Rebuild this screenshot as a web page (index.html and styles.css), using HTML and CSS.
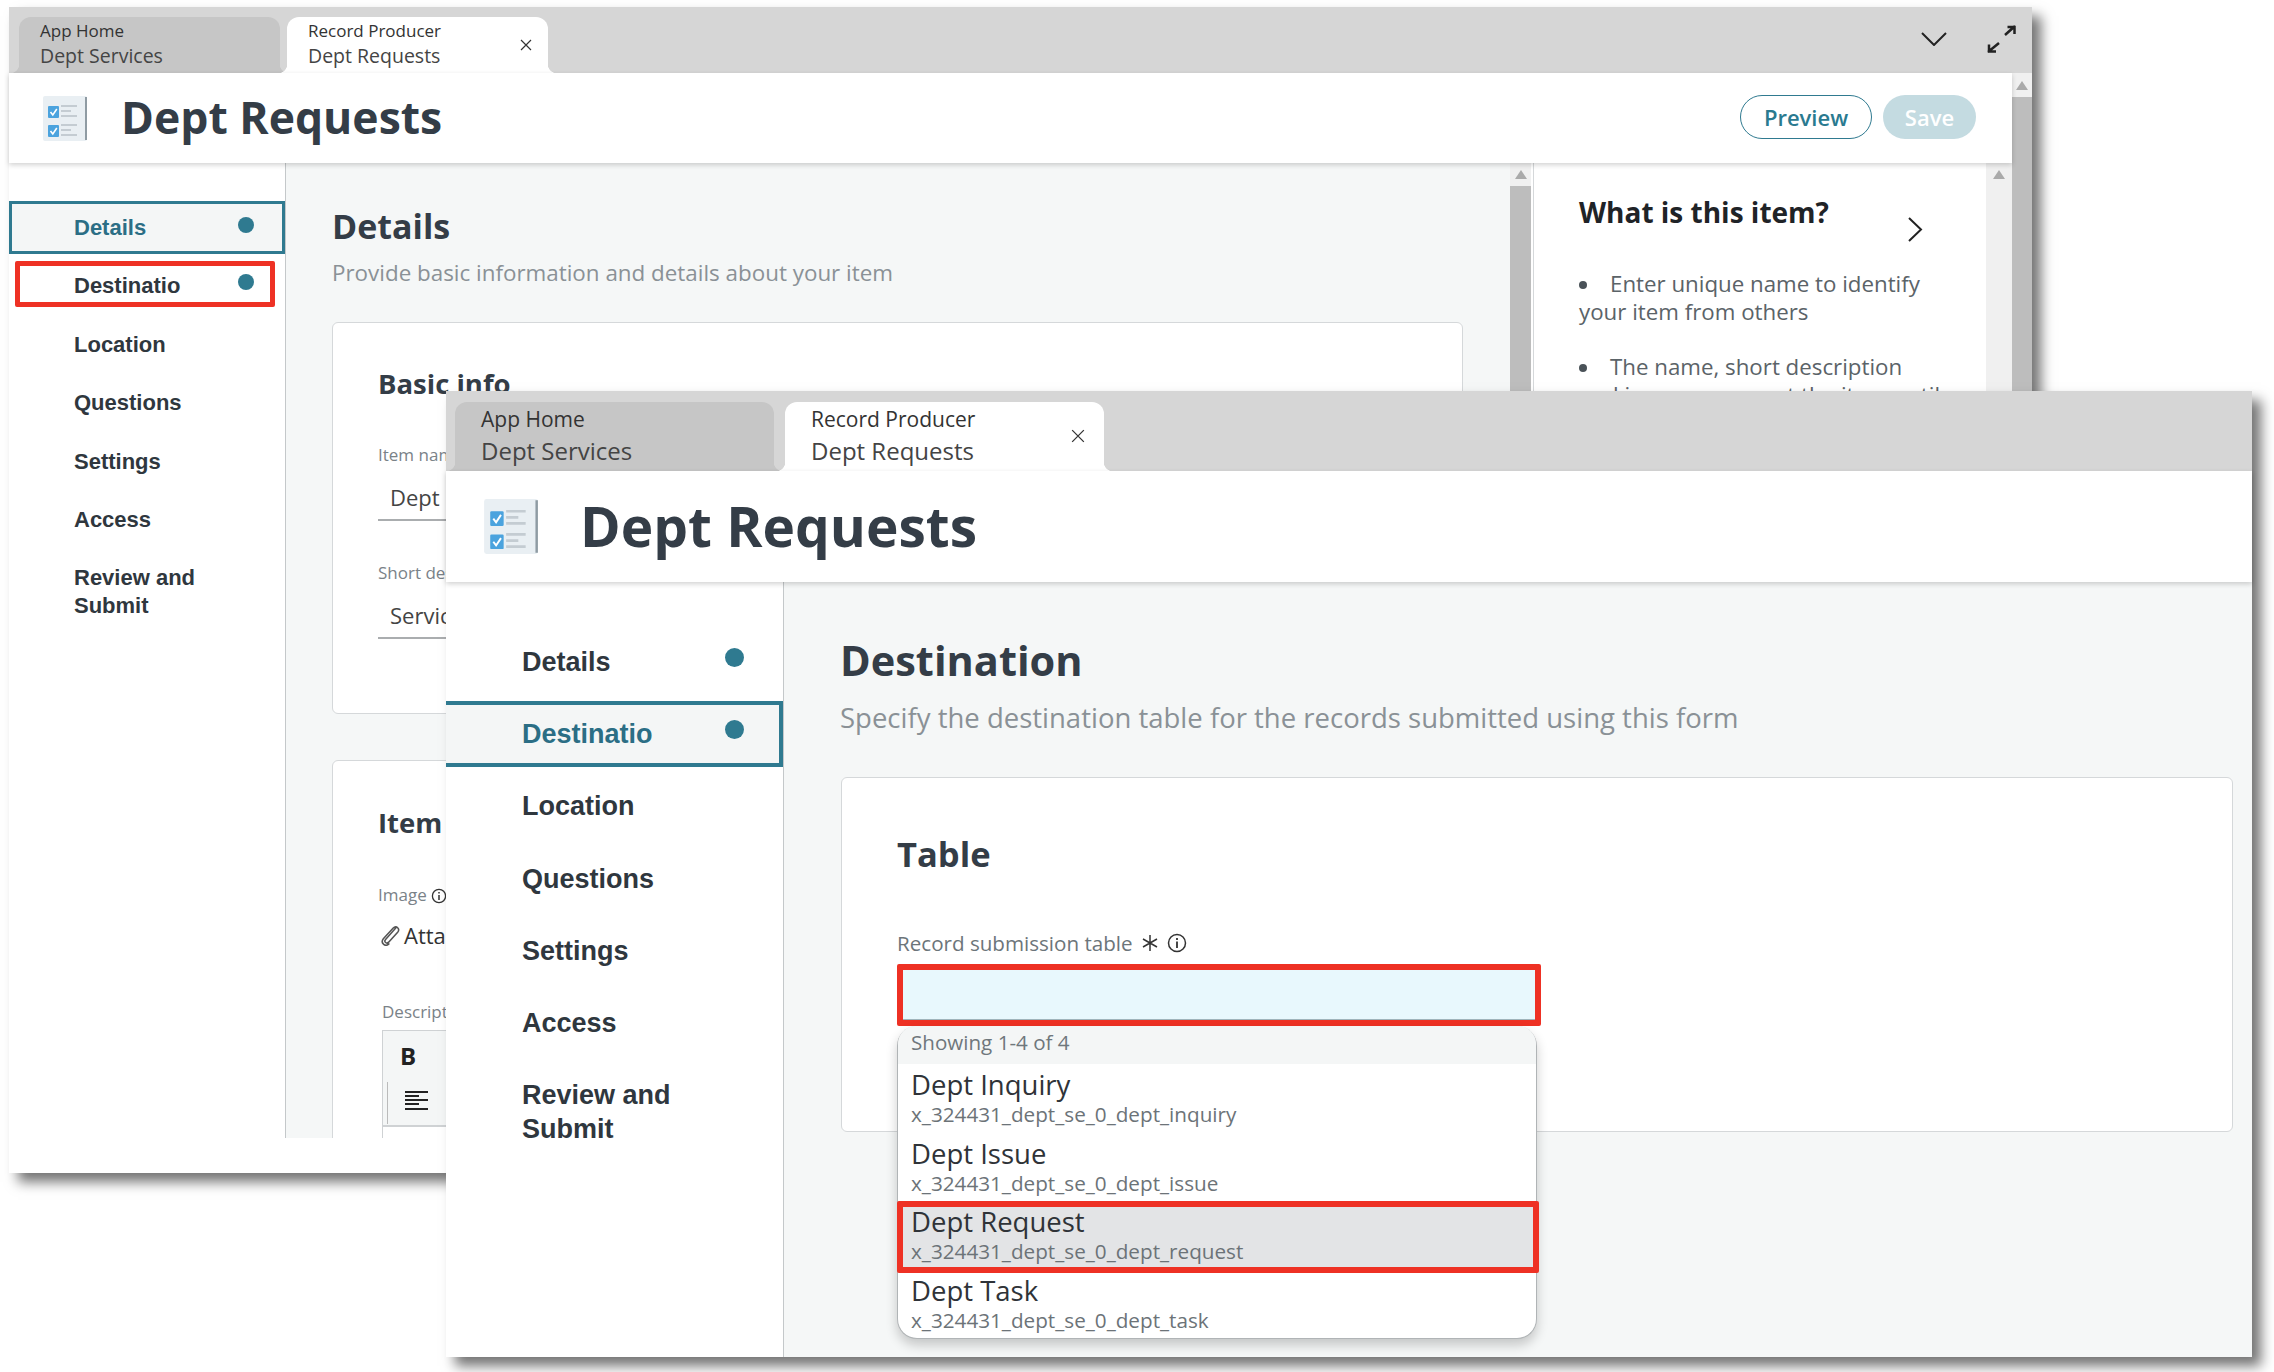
FILE: index.html
```html
<!DOCTYPE html>
<html lang="en">
<head>
  <meta charset="UTF-8">
  <title>Dept Requests</title>
  <link rel="stylesheet" href="styles.css">
</head>
<body>
  <svg width="0" height="0" class="defs">
    <symbol id="checklist" viewBox="0 0 44 45">
      <rect width="44" height="45" rx="2" fill="#e9eff3"/>
      <rect x="42" y="1" width="2" height="43" fill="#8f9ba3"/>
      <rect x="5" y="10" width="11" height="12" rx="1" fill="#4ba3de"/>
      <rect x="5" y="29" width="11" height="12" rx="1" fill="#4ba3de"/>
      <path d="M7.5 16l2.3 3 4-6M7.5 35l2.3 3 4-6" fill="none" stroke="#fff" stroke-width="1.6"/>
      <path d="M18 10h16M18 15h10M18 20h16M18 29h16M18 34h10M18 39h16" stroke="#c4ccd2" stroke-width="2.2"/>
    </symbol>
  </svg>

  <section class="window win-back">
    <div class="tabbar">
      <div class="tab">
        <span class="tab-small">App Home</span>
        <span class="tab-big">Dept Services</span>
      </div>
      <div class="tab tab-on">
        <span class="tab-small">Record Producer</span>
        <span class="tab-big">Dept Requests</span>
        <svg class="tab-close" viewBox="0 0 12 12"><path d="M1 1l10 10M11 1L1 11" stroke="#333" stroke-width="1.2"/></svg>
      </div>
      <div class="bar-icons">
        <svg class="bar-chev" viewBox="0 0 26 14"><path d="M1 1l12 12L25 1" fill="none" stroke="#222" stroke-width="2"/></svg>
        <svg class="bar-expand" viewBox="0 0 29 28"><path d="M28 1L18 10M20.500 2h7v7M1 27l11-9M2 19.500V26.500h7" fill="none" stroke="#222" stroke-width="2.500"/></svg>
      </div>
    </div>
    <div class="back-body">
      <div class="back-main">
        <header class="head">
          <svg class="head-icon"><use href="#checklist"/></svg>
          <h1 class="head-title">Dept Requests</h1>
          <div class="head-btns">
            <span class="btn btn-line">Preview</span>
            <span class="btn btn-off">Save</span>
          </div>
        </header>
        <div class="columns">
          <nav class="nav">
            <div class="nav-item active"><span>Details</span><i class="dot"></i></div>
            <div class="nav-item marked"><span>Destinatio</span><i class="dot"></i></div>
            <div class="nav-item"><span>Location</span></div>
            <div class="nav-item"><span>Questions</span></div>
            <div class="nav-item"><span>Settings</span></div>
            <div class="nav-item"><span>Access</span></div>
            <div class="nav-item"><span>Review and<br>Submit</span></div>
          </nav>
          <main class="content">
            <h2 class="page-title">Details</h2>
            <p class="page-sub">Provide basic information and details about your item</p>
            <div class="card card-basic">
              <h3 class="card-title">Basic info</h3>
              <label class="lbl">Item name</label>
              <div class="fake-input">Dept Requests</div>
              <label class="lbl">Short description</label>
              <div class="fake-input">Services</div>
            </div>
            <div class="card card-item">
              <h3 class="card-title">Item</h3>
              <div class="lbl">Image
                <svg class="info-sm" viewBox="0 0 16 16"><circle cx="8" cy="8" r="6.600" fill="none" stroke="#333" stroke-width="1.300"/><path d="M8 7v5M8 4v1.500" stroke="#333" stroke-width="1.500"/></svg>
              </div>
              <div class="attach">
                <svg class="clip" viewBox="0 0 17 20"><path d="M13.500 3.500L4 14c-1.800 2.200.8 4.500 2.800 2.500L15 7.500c2.500-3-1.200-6.800-4-3.800L2 13.500c-3 3.800 2 8 5.500 4.300" fill="none" stroke="#555" stroke-width="1.400"/></svg>
                <span>Attachment</span>
              </div>
              <div class="lbl lbl-desc">Description</div>
              <div class="editor">
                <div class="toolbar">
                  <b class="tool-b">B</b>
                  <div class="tool-row">
                    <svg class="tool-align" viewBox="0 0 23 20"><path d="M0 1h23M0 5h14M0 9h23M0 13h14M0 18h23" stroke="#222" stroke-width="2"/></svg>
                  </div>
                </div>
              </div>
            </div>
          </main>
          <div class="scroll scroll-dark"><span class="arrow"></span></div>
          <aside class="help">
            <div class="help-top">
              <h3 class="help-title">What is this item?</h3>
              <svg class="help-chev" viewBox="0 0 15 25"><path d="M1 1l12 11.500L1 24" fill="none" stroke="#222" stroke-width="2"/></svg>
            </div>
            <p class="help-text"><span class="bull"></span>Enter unique name to identify your item from others</p>
            <p class="help-text help-cut"><span class="bull"></span>The name, short description<br>and image represent the item until</p>
          </aside>
          <div class="scroll"><span class="arrow"></span></div>
        </div>
      </div>
      <div class="scroll-outer"><span class="arrow"></span></div>
    </div>
  </section>

  <section class="window win-front">
    <div class="tabbar">
      <div class="tab">
        <span class="tab-small">App Home</span>
        <span class="tab-big">Dept Services</span>
      </div>
      <div class="tab tab-on">
        <span class="tab-small">Record Producer</span>
        <span class="tab-big">Dept Requests</span>
        <svg class="tab-close" viewBox="0 0 12 12"><path d="M1 1l10 10M11 1L1 11" stroke="#333" stroke-width="1.100"/></svg>
      </div>
    </div>
    <header class="head">
      <svg class="head-icon"><use href="#checklist"/></svg>
      <h1 class="head-title">Dept Requests</h1>
    </header>
    <div class="columns">
      <nav class="nav">
        <div class="nav-item"><span>Details</span><i class="dot"></i></div>
        <div class="nav-item active"><span>Destinatio</span><i class="dot"></i></div>
        <div class="nav-item"><span>Location</span></div>
        <div class="nav-item"><span>Questions</span></div>
        <div class="nav-item"><span>Settings</span></div>
        <div class="nav-item"><span>Access</span></div>
        <div class="nav-item"><span>Review and<br>Submit</span></div>
      </nav>
      <main class="content">
        <h2 class="page-title">Destination</h2>
        <p class="page-sub">Specify the destination table for the records submitted using this form</p>
        <div class="card card-table">
          <h3 class="card-title">Table</h3>
          <div class="lbl">
            <span>Record submission table</span>
            <svg class="req" viewBox="0 0 16 16"><path d="M8 0v16M1 4l14 8M15 4L1 12" stroke="#333" stroke-width="1.500"/></svg>
            <svg class="info" viewBox="0 0 20 20"><circle cx="10" cy="10" r="8.500" fill="none" stroke="#333" stroke-width="1.500"/><path d="M10 8.500V15M10 5v2" stroke="#333" stroke-width="1.800"/></svg>
          </div>
          <div class="table-input"></div>
          <div class="drop">
            <div class="drop-head">Showing 1-4 of 4</div>
            <div class="drop-item"><span class="drop-name">Dept Inquiry</span><span class="drop-key">x_324431_dept_se_0_dept_inquiry</span></div>
            <div class="drop-item"><span class="drop-name">Dept Issue</span><span class="drop-key">x_324431_dept_se_0_dept_issue</span></div>
            <div class="drop-item picked"><span class="drop-name">Dept Request</span><span class="drop-key">x_324431_dept_se_0_dept_request</span></div>
            <div class="drop-item"><span class="drop-name">Dept Task</span><span class="drop-key">x_324431_dept_se_0_dept_task</span></div>
          </div>
        </div>
      </main>
    </div>
  </section>
</body>
</html>
```

FILE: styles.css
```css
*, *::before, *::after { box-sizing: border-box; }
html, body { margin: 0; padding: 0; }
body { position: relative; width: 2274px; height: 1372px; overflow: hidden; background: #fff; font-family: "Open Sans", "Noto Sans", sans-serif; color: #343d47; }
h1, h2, h3, p { margin: 0; }
.defs { position: absolute; }

/* the two app windows sit freely on the canvas */
.window { position: absolute; display: flex; flex-direction: column; background: #fff; box-shadow: 9px 9px 12px rgba(0, 0, 0, .55); }
.win-back { left: 9px; top: 7px; width: 2023px; height: 1166px; }
.win-front { left: 446px; top: 391px; width: 1806px; height: 966px; }

/* tab strip */
.tabbar { display: flex; flex: none; background: #d6d6d6; }
.tab { position: relative; display: flex; flex-direction: column; background: #c6c6c6; border-radius: 12px 12px 0 0; color: #333; }
.tab::before, .tab::after { content: ""; position: absolute; bottom: 0; width: 9px; height: 9px; }
.tab::before { left: -9px; background: radial-gradient(circle at 0 0, transparent 9px, #c6c6c6 9.500px); }
.tab::after { right: -9px; background: radial-gradient(circle at 100% 0, transparent 9px, #c6c6c6 9.500px); }
.tab-on { background: #fff; }
.tab-on::before { background: radial-gradient(circle at 0 0, transparent 9px, #fff 9.500px); }
.tab-on::after { background: radial-gradient(circle at 100% 0, transparent 9px, #fff 9.500px); }
.tab-close { position: absolute; }
.tab-small, .tab-big { white-space: nowrap; }

.win-back .tabbar { height: 66px; padding: 10px 0 0 10px; gap: 7px; }
.win-back .tab { width: 261px; height: 56px; padding: 1px 0 0 21px; }
.win-back .tab-small { font-size: 17px; line-height: 25px; }
.win-back .tab-big { font-size: 19.500px; line-height: 25px; color: #444; }
.win-back .tab-close { right: 16px; top: 22px; width: 12px; height: 12px; }

.win-front .tabbar { height: 80px; padding: 11px 0 0 9px; gap: 11px; }
.win-front .tab { width: 319px; height: 69px; padding: 2px 0 0 26px; }
.win-front .tab-small { font-size: 21px; line-height: 31px; }
.win-front .tab-big { font-size: 24px; line-height: 31px; color: #444; }
.win-front .tab-close { right: 19px; top: 27px; width: 14px; height: 14px; }

.bar-icons { margin-left: auto; display: flex; align-items: flex-start; }
.bar-chev { width: 26px; height: 14px; margin: 15px 40px 0 0; }
.bar-expand { width: 29px; height: 28px; margin: 8px 16px 0 0; }

/* header */
.head { display: flex; align-items: center; flex: none; background: #fff; position: relative; z-index: 2; box-shadow: 0 2px 5px rgba(0, 0, 0, .18); }
.head-title { font-weight: 700; color: #343d47; white-space: nowrap; }
.win-back .head { height: 90px; padding: 0 36px 0 34px; }
.win-back .head-icon { width: 44px; height: 45px; margin-right: 34px; }
.win-back .head-title { font-size: 44.500px; margin-top: -3px; }
.win-front .head { height: 111px; padding-left: 38px; }
.win-front .head-icon { width: 54px; height: 55px; margin-right: 42px; }
.win-front .head-title { font-size: 55px; margin-top: -3px; }

.head-btns { margin-left: auto; margin-top: -3px; display: flex; gap: 11px; }
.btn { height: 44px; line-height: 42px; border-radius: 22px; font-size: 22px; font-weight: 600; text-align: center; }
.btn-line { width: 132px; border: 1px solid #2f7a90; color: #2a7a90; }
.btn-off { width: 93px; background: #c4dbe1; color: #fff; line-height: 44px; }

/* bodies */
.back-body { display: flex; flex: 1; min-height: 0; }
.back-main { flex: 1; min-width: 0; height: 1100px; }
.columns { display: flex; min-height: 0; }
.win-back .columns { height: 975px; }
.win-front .columns { height: 775px; }

.nav { flex: none; display: flex; flex-direction: column; background: #fff; border-right: 1px solid #c4c8ca; font-family: "Liberation Sans", Arial, sans-serif; font-weight: 700; }
.nav-item { position: relative; display: flex; justify-content: space-between; align-items: flex-start; color: #2f373e; }
.nav-item.active { background: #f4f6f6; color: #2b6e85; border: solid #2f7a90; }
.dot { flex: none; border-radius: 50%; background: #2f7a90; }

.win-back .nav { width: 277px; padding-top: 38px; gap: 5.400px; font-size: 22px; }
.win-back .nav-item { padding: 13px 0 11px 65px; line-height: 28px; min-height: 53px; }
.win-back .nav-item.active { border-width: 3px; padding: 10px 0 8px 62px; }
.win-back .dot { width: 16px; height: 16px; margin: 2px 31px 0 0; }
.win-back .nav-item.active .dot { margin-right: 28px; margin-top: 3px; }
.nav-item.marked::after { content: ""; position: absolute; left: 6px; right: 10px; top: 2px; height: 46px; border: 5px solid #ee3124; border-radius: 2px; }

.win-front .nav { width: 338px; padding-top: 47px; gap: 6.200px; font-size: 27px; }
.win-front .nav-item { padding: 16px 0 16px 76px; line-height: 34px; min-height: 66px; }
.win-front .nav-item.active { border-width: 4px 4px 4px 0; padding: 12px 0 12px 76px; }
.win-front .dot { width: 19px; height: 19px; margin: 3px 39px 0 0; }
.win-front .nav-item.active .dot { margin-right: 35px; }

.content { flex: 1; min-width: 0; overflow: hidden; background: #f5f7f7; }
.page-title { font-weight: 700; color: #343d47; }
.page-sub { color: #8a9196; }
.card { background: #fff; border: 1px solid #d5d8da; border-radius: 6px; }
.card-title { font-weight: 700; color: #343d47; }
.lbl { color: #7a8288; white-space: nowrap; }

.win-back .content { padding: 39px 47px 0 46px; }
.win-back .page-title { font-size: 34px; line-height: 48px; }
.win-back .page-sub { font-size: 22.400px; line-height: 30px; margin-top: 8px; }
.win-back .card { margin-top: 34px; padding: 41px 45px 0; }
.win-back .card-title { font-size: 27.500px; line-height: 40px; }
.win-back .lbl { display: block; font-size: 17px; line-height: 24px; }
.card-basic { height: 392px; }
.win-back .card-basic .lbl { margin-top: 40px; }
.win-back .card-basic .card-title + .lbl { margin-top: 39px; }
.fake-input { height: 46px; line-height: 44px; margin-top: 8px; padding-left: 12px; border-bottom: 2px solid #aaadaf; font-size: 22px; color: #444; }
.win-back .card-item { margin-top: 46px; height: 500px; padding-top: 42px; }
.win-back .card-item .lbl { margin-top: 40px; }
.info-sm { width: 16px; height: 16px; vertical-align: -3px; }
.attach { display: flex; align-items: center; gap: 4px; margin: 13px 0 0 3px; font-size: 22px; color: #333; }
.clip { width: 19px; height: 22px; }
.win-back .card-item .lbl-desc { margin: 50px 0 0 4px; }
.editor { margin: 6px 0 0 4px; border: 1px solid #cfd2d4; border-bottom: 0; height: 200px; }
.toolbar { height: 96px; background: #f4f6f6; border-bottom: 2px solid #cfd2d4; padding: 9px 0 0 17px; }
.tool-b { display: block; font-size: 24px; line-height: 32px; color: #222; font-weight: 700; }
.tool-row { position: relative; margin: 10px 0 0 -13px; height: 42px; border-left: 1px solid #bbb; padding: 9px 0 0 17px; }
.tool-align { display: block; width: 23px; height: 20px; }

/* scrollbars */
.scroll, .scroll-outer { position: relative; flex: none; background: #f0f0f0; }
.arrow { position: absolute; left: 50%; margin-left: -6px; border: solid transparent; border-width: 0 6px 9px; border-bottom-color: #aaa; }
.scroll { width: 26px; }
.scroll .arrow { top: 7px; }
.scroll-dark { width: 21px; margin-right: 2px; background: linear-gradient(#f0f0f0 23px, #bdbdbd 23px); }
.scroll-outer { flex: none; width: 20px; background: linear-gradient(#f0f0f0 24px, #bdbdbd 24px); }
.scroll-outer .arrow { top: 8px; }

/* help panel */
.help { flex: none; width: 453px; background: #fff; border-left: 1px solid #d5d8da; padding: 30px 60px 0 45px; }
.help-top { display: flex; justify-content: space-between; height: 77px; margin-right: 3px; }
.help-title { font-size: 28px; font-weight: 700; line-height: 39px; color: #1f2327; white-space: nowrap; }
.help-chev { flex: none; width: 15px; height: 25px; margin-top: 24px; }
.help-text { font-size: 22.300px; line-height: 27.500px; color: #5b6368; margin-bottom: 28px; }
.help-cut { white-space: nowrap; }
.bull { display: inline-block; width: 8px; height: 8px; border-radius: 50%; background: #4a5258; margin-right: 23px; vertical-align: 3px; }

/* front window content */
.win-front .content { padding: 54px 19px 0 56px; }
.win-front .page-title { font-size: 41.500px; line-height: 48px; }
.win-front .page-sub { font-size: 27.500px; line-height: 36px; margin-top: 16px; }
.win-front .card { margin-top: 41px; height: 355px; padding: 52px 0 0 55px; margin-left: 1px; }
.win-front .card-title { font-size: 34.500px; line-height: 48px; }
.win-front .lbl { display: flex; align-items: center; margin-top: 50px; font-size: 20.600px; line-height: 30px; color: #6c757a; }
.req { width: 16px; height: 16px; margin-left: 9px; }
.info { width: 20px; height: 20px; margin-left: 9px; }
.table-input { width: 644px; height: 62px; margin-top: 6px; background: #e8f8fd; border: 6px solid #ee3124; border-radius: 2px; box-shadow: inset 0 -1px #9fb4bb; }
.drop { position: relative; z-index: 3; width: 640px; height: 313px; background: #fff; border: 1px solid #b0b4b6; border-top: 0; border-radius: 20px; box-shadow: 0 6px 12px rgba(0, 0, 0, .2); }
.drop-head { height: 38px; line-height: 32px; padding-left: 13px; background: #f4f6f6; font-size: 20.600px; color: #6f777c; border-radius: 18px 18px 0 0; }
.drop-item { position: relative; display: flex; flex-direction: column; height: 68.500px; padding: 3px 0 0 13px; }
.drop-name { font-size: 27.500px; line-height: 35px; color: #2f3338; }
.drop-key { font-size: 20.700px; line-height: 24px; color: #6c7378; }
.picked { background: #e3e4e6; }
.picked::after { content: ""; position: absolute; left: -1px; right: -3px; top: 0; bottom: -3px; border: 6px solid #ee3124; border-radius: 2px; }
```
